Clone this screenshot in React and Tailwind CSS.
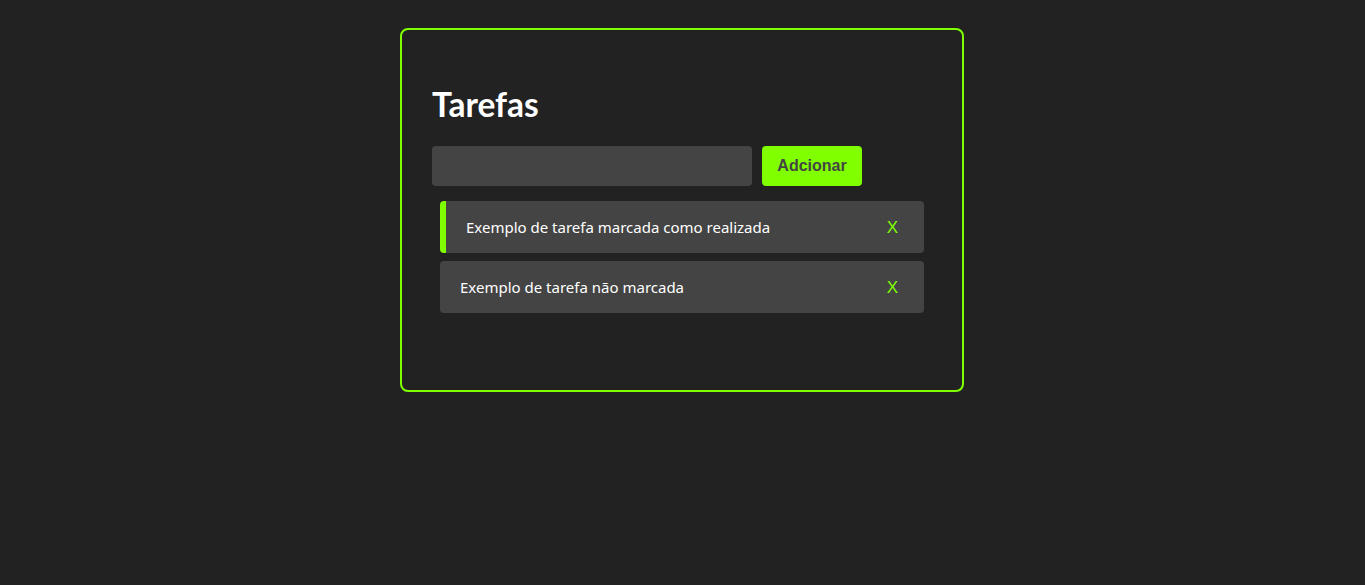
export default function App() {
  return (
    <div className="flex min-h-[585px] w-full justify-center bg-[#222222] pr-[1px] pt-[28px]" style={{ fontFamily: '"Noto Sans", sans-serif' }}>
      <div className="box-border h-[364px] w-[564px] self-start rounded-[8px] border-2 border-[#7fff00] px-[30px] pt-[54px]">
        <h1 className="m-0 text-[33.5px] font-bold leading-[40px] text-white" style={{ fontFamily: 'Lato, sans-serif' }}>Tarefas</h1>
        <div className="mt-[22px] flex gap-[10px]">
          <input className="h-[40px] w-[320px] rounded-[4px] border-0 bg-[#444444] px-3 text-white outline-none" />
          <button className="h-[40px] w-[100px] rounded-[4px] bg-[#7fff00] text-[16px] font-bold text-[#444444]" style={{ fontFamily: '"Liberation Sans", Arial, sans-serif' }}>Adcionar</button>
        </div>
        <ul className="mt-[15px] ml-[8px] flex w-[484px] flex-col gap-[8px]">
          <li className="flex h-[52px] items-center justify-between rounded-[4px] border-l-[6px] border-[#7fff00] bg-[#444444] pl-[20px] pr-[26px] text-[15px] text-white">
            <span>Exemplo de tarefa marcada como realizada</span>
            <span className="pt-[2px] text-[17px] text-[#7fff00]" style={{ fontFamily: '"Liberation Sans", Arial, sans-serif' }}>X</span>
          </li>
          <li className="flex h-[52px] items-center justify-between rounded-[4px] bg-[#444444] pl-[20px] pr-[26px] text-[15px] text-white">
            <span>Exemplo de tarefa não marcada</span>
            <span className="pt-[2px] text-[17px] text-[#7fff00]" style={{ fontFamily: '"Liberation Sans", Arial, sans-serif' }}>X</span>
          </li>
        </ul>
      </div>
    </div>
  );
}
